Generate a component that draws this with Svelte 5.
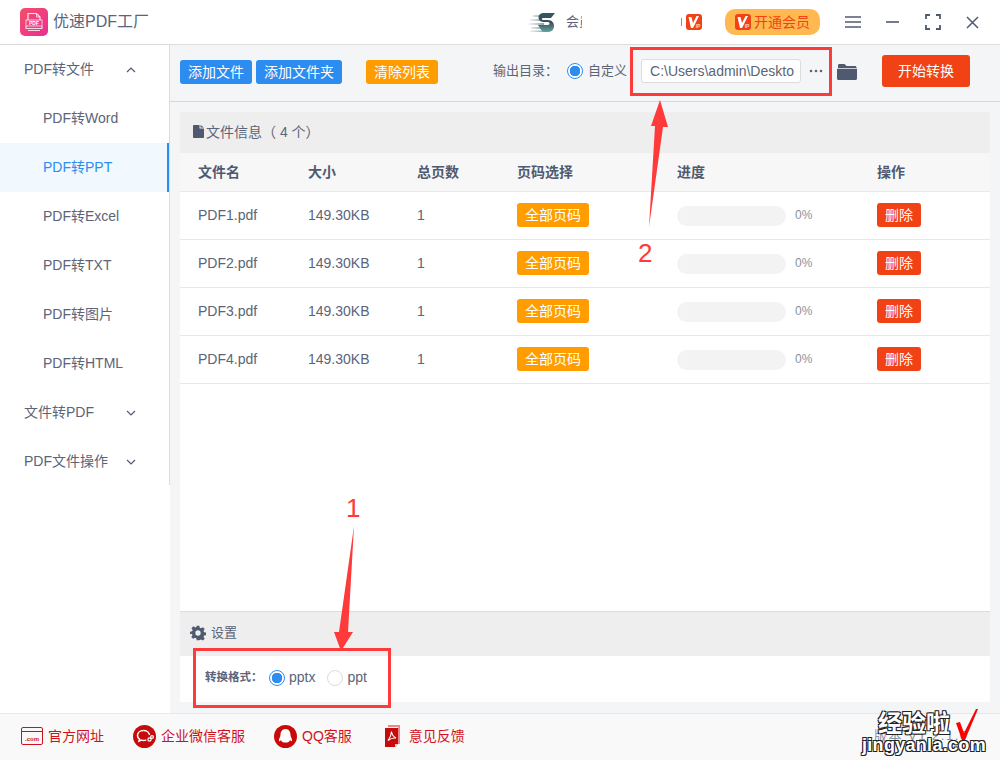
<script>
	const menu = ['PDF转Word', 'PDF转PPT', 'PDF转Excel', 'PDF转TXT', 'PDF转图片', 'PDF转HTML'];
	const files = ['PDF1.pdf', 'PDF2.pdf', 'PDF3.pdf', 'PDF4.pdf'];
</script>

{#snippet vipIcon()}
	<svg width="16" height="16" viewBox="0 0 16 16">
		<rect width="16" height="16" rx="3" fill="#f04215" />
		<path d="M2.500 3h3l1.500 6 3.500-7h2.500L7 14H5z" fill="#fff" />
		<text x="12" y="13.500" class="vip-ip">IP</text>
	</svg>
{/snippet}

<div class="app">
	<header class="titlebar">
		<div class="logo">
			<svg width="28" height="28" viewBox="0 0 28 28">
				<defs>
					<linearGradient id="lg" x1="0" y1="0" x2="1" y2="1">
						<stop offset="0" stop-color="#f0506a" />
						<stop offset="1" stop-color="#ec2f92" />
					</linearGradient>
				</defs>
				<rect width="28" height="28" rx="5" fill="url(#lg)" />
				<path d="M8 12V5.500h8.500l3.500 3.500v3" fill="none" stroke="#fff" stroke-width="1.200" opacity="0.85" />
				<path d="M16.500 5.500V9H20" fill="none" stroke="#fff" stroke-width="1" opacity="0.7" />
				<rect x="6" y="12" width="16" height="6" fill="none" stroke="#fff" stroke-width="1" opacity="0.7" />
				<text x="14" y="17" class="logo-text">PDF</text>
				<path d="M6 18v2.500h16V18M8 22.500h12" fill="none" stroke="#fff" stroke-width="1.100" opacity="0.8" />
			</svg>
			<span class="app-name">优速PDF工厂</span>
		</div>

		<div class="promo">
			<svg width="28" height="21" viewBox="0 0 28 21">
				<defs>
					<linearGradient id="sg" x1="0" y1="0" x2="0" y2="1">
						<stop offset="0" stop-color="#2f5963" />
						<stop offset="0.5" stop-color="#3e4f5c" />
						<stop offset="1" stop-color="#5fa5a0" />
					</linearGradient>
					<linearGradient id="fade" x1="0" y1="0" x2="1" y2="0">
						<stop offset="0" stop-color="#9fb8b8" stop-opacity="0.1" />
						<stop offset="1" stop-color="#7e9aa0" />
					</linearGradient>
				</defs>
				<path d="M5 3h10v2H5zM2 7h12v2H2zM0 11h16v2H0zM3 15h14v2H3zM2 18.500h14v1.500H2z" fill="url(#fade)" />
				<path d="M27 1H15C9 1 9 10 15 10h5c2 0 2 3 0 3-4 0-7 0-10 0 2 3 4 7 6 7h4c8 0 8-12 0-12h-5c-1.500 0-1.500-2 0-2h8z" fill="url(#sg)" />
			</svg>
			<span class="promo-text">会员</span>
		</div>

		<span class="vip-mini">
			<i class="sliver"></i>
			{@render vipIcon()}
		</span>
		<button class="vip-btn">
			{@render vipIcon()}
			开通会员
		</button>

		<div class="win-ctrls">
			<svg width="16" height="12" viewBox="0 0 16 12"><path d="M0 1h16M0 6h16M0 11h16" stroke="#4f5a70" stroke-width="1.600" /></svg>
			<svg width="14" height="12" viewBox="0 0 14 12"><path d="M0 6h13" stroke="#4f5a70" stroke-width="1.600" /></svg>
			<svg width="16" height="16" viewBox="0 0 16 16"><path d="M1 5V1h4M11 1h4v4M15 11v4h-4M5 15H1v-4" fill="none" stroke="#4f5a70" stroke-width="1.800" /></svg>
			<svg width="13" height="13" viewBox="0 0 13 13"><path d="M1 1l11 11M12 1L1 12" stroke="#4f5a70" stroke-width="1.500" /></svg>
		</div>
	</header>

	<div class="body">
		<aside class="sidebar">
			<div class="group">PDF转文件
				<svg class="chev" width="10" height="6" viewBox="0 0 10 6"><path d="M1 5l4-4 4 4" fill="none" stroke="#4f5a70" stroke-width="1.200" /></svg>
			</div>
			{#each menu as item, i}
				<div class="item" class:active={i === 1}>{item}</div>
			{/each}
			<div class="group">文件转PDF
				<svg class="chev" width="10" height="6" viewBox="0 0 10 6"><path d="M1 1l4 4 4-4" fill="none" stroke="#4f5a70" stroke-width="1.200" /></svg>
			</div>
			<div class="group">PDF文件操作
				<svg class="chev" width="10" height="6" viewBox="0 0 10 6"><path d="M1 1l4 4 4-4" fill="none" stroke="#4f5a70" stroke-width="1.200" /></svg>
			</div>
		</aside>

		<main class="main">
			<div class="toolbar">
				<button class="btn blue">添加文件</button>
				<button class="btn blue second">添加文件夹</button>
				<button class="btn orange clear">清除列表</button>
				<span class="out-label">输出目录：</span>
				<span class="radio on"></span>
				<span class="out-custom">自定义</span>
				<div class="path">C:\Users\admin\Deskto</div>
				<span class="dots">
					<svg width="14" height="4" viewBox="0 0 14 4"><circle cx="2" cy="2" r="1.300" /><circle cx="7" cy="2" r="1.300" /><circle cx="12" cy="2" r="1.300" /></svg>
				</span>
				<svg class="folder" width="20" height="17" viewBox="0 0 20 17">
					<path d="M1 2.500C1 1.500 1.600 1 2.500 1h5l2 2h8.500c.8 0 1.500.6 1.500 1.500V5H1z" fill="#4f5a70" />
					<path d="M0 5.800h20v9.700c0 .8-.7 1.500-1.500 1.500h-17C.7 17 0 16.300 0 15.500z" fill="#4f5a70" />
				</svg>
				<button class="start">开始转换</button>
			</div>

			<section class="panel">
				<div class="panel-title">
					<svg width="11" height="13" viewBox="0 0 11 13"><path d="M0 1c0-.6.4-1 1-1h5.500v3.500H11V12c0 .6-.4 1-1 1H1c-.6 0-1-.4-1-1zM7.500 0L11 2.500H7.500z" fill="#4f5a70" /></svg>
					<span>文件信息（ 4 个）</span>
				</div>
				<div class="row head">
					<span>文件名</span><span>大小</span><span>总页数</span><span>页码选择</span><span>进度</span><span>操作</span>
				</div>
				{#each files as f}
					<div class="row">
						<span>{f}</span>
						<span>149.30KB</span>
						<span>1</span>
						<span><button class="tag orange">全部页码</button></span>
						<span class="prog"><i class="track"></i><em>0%</em></span>
						<span><button class="tag red">删除</button></span>
					</div>
				{/each}
				<div class="spacer"></div>
				<div class="set-title">
					<svg width="16" height="16" viewBox="0 0 24 24"><path fill="#4f5a70" fill-rule="evenodd" d="M10 1h4l.6 3.200 2 .8L19.300 3.200l2.800 2.800-1.800 2.700.8 2 3.200.6v4l-3.200.6-.8 2 1.800 2.700-2.800 2.800-2.700-1.800-2 .8L14 23h-4l-.6-3.200-2-.8-2.700 1.800-2.800-2.800 1.800-2.700-.8-2L0 14v-4l3.200-.6.800-2L2.200 4.700 5 1.900l2.700 1.800 2-.8zM12 8a4 4 0 1 0 0 8 4 4 0 0 0 0-8z" /></svg>
					<span>设置</span>
				</div>
				<div class="set-body">
					<b>转换格式：</b>
					<span class="radio on"></span><span class="fmt">pptx</span>
					<span class="radio off"></span><span class="fmt">ppt</span>
				</div>
			</section>
		</main>
	</div>

	<footer class="footer">
		<span class="link first">
			<svg width="22" height="18" viewBox="0 0 22 18"><rect x=".5" y=".5" width="21" height="17" rx="1.500" fill="none" stroke="#d0111b" /><path d="M1 4.500h20" stroke="#d0111b" /><text x="11" y="14" class="com">.com</text></svg>
			官方网址
		</span>
		<span class="link wx">
			<svg width="23" height="23" viewBox="0 0 23 23">
				<circle cx="11.500" cy="11.500" r="11.500" fill="#c70a0a" />
				<path d="M10.500 5.500c-3.500 0-6 2.200-6 5 0 1.500.8 2.800 2 3.700l-.5 2 2.300-1.100c.7.200 1.400.3 2.200.3 1 0 2-.2 2.800-.6" fill="none" stroke="#fff" stroke-width="1.500" />
				<path d="M10.500 5.500c3.200 0 5.800 2 6 4.500" fill="none" stroke="#fff" stroke-width="1.500" />
				<circle cx="16.500" cy="14.500" r="1.600" fill="none" stroke="#fff" stroke-width="1.200" />
				<circle cx="19" cy="12" r="1.400" fill="none" stroke="#fff" stroke-width="1.200" />
			</svg>
			企业微信客服
		</span>
		<span class="link qq">
			<svg width="23" height="23" viewBox="0 0 23 23"><circle cx="11.500" cy="11.500" r="11.500" fill="#c70a0a" /><path d="M11.500 4c3.500 0 5 3 5 6 0 2 2 4 1.500 6-.5.500-1.500 0-2-1-.5 2-2 2.500-4.500 2.500S7.500 17 7 15c-.5 1-1.500 1.500-2 1-.5-2 1.500-4 1.500-6 0-3 1.500-6 5-6z" fill="#fff" /></svg>
			QQ客服
		</span>
		<span class="link fb">
			<svg width="17" height="23" viewBox="0 0 17 23">
				<path d="M4 0h12v19h-2V2H4z" fill="#e98a8a" />
				<path d="M1 3h13v16l-3 3H1z" fill="#c70a0a" />
				<path d="M11 22l3-3h-3z" fill="#f6c9c9" />
				<path d="M7.500 6.500c.4 3 1.500 5 4.500 6.500-3-.3-5.500.3-8 2.500 2-2.500 3.300-5.500 3.500-9z" fill="none" stroke="#fff" stroke-width="1.100" />
			</svg>
			意见反馈
		</span>
	</footer>

	<!-- annotations drawn over the screenshot -->
	<div class="mark box-path"></div>
	<div class="mark box-fmt"></div>
	<svg class="arrows" width="1000" height="760" viewBox="0 0 1000 760">
		<path d="M649 227L655 126 651 126 660 100 668 127 663 127z" fill="#ff3a3a" />
		<path d="M354 526L348 632 353 632 341 651 334 632 339 632z" fill="#ff3a3a" />
	</svg>
	<span class="num n1">1</span>
	<span class="num n2">2</span>

	<div class="wm">
		<span class="ver">版本 V1.2.1.0</span>
		<span class="wm-top">经验啦</span>
		<svg class="tick" width="24" height="32" viewBox="0 0 24 32"><path d="M1 14l4-1 4 11L21 0h2L10 31H7z" fill="#f00" /></svg>
		<span class="wm-bot">jingyanla.com</span>
	</div>
</div>

<style>
	:global(body) {
		margin: 0;
		background: #fff;
	}

	.app {
		position: relative;
		width: 1000px;
		height: 760px;
		overflow: hidden;
		display: flex;
		flex-direction: column;
		font-family: "Liberation Sans", "Noto Sans CJK SC", sans-serif;
		color: #5b6478;
		font-size: 14px;
		line-height: 20px;
	}

	button {
		border: 0;
		padding: 0;
		font-family: inherit;
		line-height: 20px;
	}

	.titlebar {
		height: 44px;
		flex: none;
		display: flex;
		align-items: center;
		border-bottom: 1px solid #dcdcdc;
		padding-left: 20px;
	}

	.logo {
		display: flex;
		align-items: center;
		gap: 5px;
		width: 508px;
	}

	.logo-text {
		font-size: 5px;
		font-weight: 700;
		fill: #fff;
		text-anchor: middle;
	}

	.app-name {
		font-size: 16px;
		color: #5b6478;
	}

	.promo {
		display: flex;
		align-items: center;
		gap: 10px;
		width: 153px;
		font-size: 13px;
	}

	.promo-text {
		width: 16px;
		overflow: hidden;
		white-space: nowrap;
	}

	.sliver {
		width: 1px;
		height: 8px;
		margin: 4px 4px 0 0;
		background: #8a92a0;
	}

	.vip-mini {
		display: flex;
		width: 44px;
	}

	.vip-ip {
		font-size: 5px;
		font-weight: 700;
		fill: #ffd2b8;
		text-anchor: middle;
	}

	.vip-btn {
		width: 95px;
		height: 26px;
		border-radius: 10px;
		background: #ffb950;
		color: #f04215;
		font-size: 14px;
		display: flex;
		align-items: center;
		justify-content: center;
		gap: 3px;
	}

	.win-ctrls {
		display: flex;
		align-items: center;
		margin-left: 25px;
		gap: 25px;
	}

	.body {
		flex: 1;
		display: flex;
		min-height: 0;
	}

	.sidebar {
		width: 169px;
		height: 440px;
		flex: none;
		border-right: 1px solid #dcdcdc;
		background: #fff;
	}

	.group {
		height: 47px;
		padding: 0 33px 2px 24px;
		display: flex;
		align-items: center;
		justify-content: space-between;
		font-size: 14px;
	}

	.chev {
		margin-top: 2px;
	}

	.item {
		height: 49px;
		line-height: 49px;
		padding-left: 43px;
		font-size: 14px;
	}

	.item.active {
		background: #f1f8fe;
		color: #2d8cf0;
		box-shadow: inset -2px 0 0 #2d8cf0;
	}

	.main {
		flex: 1;
		background: #f4f5f7;
		height: 668px;
		display: flex;
		flex-direction: column;
	}

	.toolbar {
		height: 52px;
		padding-bottom: 4px;
		flex: none;
		display: flex;
		align-items: center;
		border-bottom: 1px solid #d8d8d8;
		padding-left: 10px;
	}

	.btn {
		height: 24px;
		margin-top: 2px;
		border-radius: 3px;
		color: #fff;
		font-size: 14px;
		padding: 0 8px;
	}

	.blue {
		background: #2d8cf0;
	}

	.orange {
		background: #ff9c00;
	}

	.second {
		margin-left: 4px;
	}

	.clear {
		margin-left: 24px;
	}

	.out-label {
		margin-left: 55px;
		font-size: 13px;
	}

	.radio {
		width: 16px;
		height: 16px;
		box-sizing: border-box;
		border-radius: 50%;
		display: inline-block;
		flex: none;
		background: #fff;
		border: 1px solid #dcdcdc;
	}

	.radio.on {
		border-color: #2d8cf0;
		background: radial-gradient(circle, #2d8cf0 0 5px, #fff 5.500px);
	}

	.toolbar .radio {
		margin-left: 9px;
	}

	.out-custom {
		margin-left: 5px;
		font-size: 13px;
		width: 43px;
		flex: none;
	}

	.path {
		width: 160px;
		height: 24px;
		box-sizing: border-box;
		border: 1px solid #dcdcdc;
		border-radius: 3px;
		background: #fff;
		font-size: 14px;
		line-height: 22px;
		padding-left: 8px;
		white-space: nowrap;
		overflow: hidden;
		margin-left: 10px;
		flex: none;
	}

	.dots {
		margin-left: 8px;
		display: flex;
		fill: #5b6478;
	}

	.folder {
		margin-left: 14px;
	}

	.start {
		width: 88px;
		height: 32px;
		margin-left: 25px;
		border-radius: 3px;
		background: #f04215;
		color: #fff;
		font-size: 14px;
	}

	.panel {
		flex: 1;
		margin: 10px 10px 11px;
		background: #fff;
		display: flex;
		flex-direction: column;
	}

	.panel-title {
		height: 39px;
		padding: 0 0 2px 13px;
		flex: none;
		background: #eee;
		display: flex;
		align-items: center;
		gap: 2px;
		font-size: 14px;
	}

	.row {
		height: 45px;
		padding: 0 0 2px 18px;
		flex: none;
		display: grid;
		grid-template-columns: 110px 109px 100px 160px 200px 1fr;
		align-items: center;
		border-bottom: 1px solid #e8e8e8;
		font-size: 14px;
	}

	.row.head {
		height: 38px;
		padding-bottom: 0;
		background: #f7f7f7;
		font-weight: 700;
		font-size: 14px;
		color: #4f5a70;
	}

	.tag {
		display: block;
		height: 24px;
		border-radius: 3px;
		color: #fff;
		font-size: 14px;
	}

	.tag.orange {
		width: 72px;
	}

	.tag.red {
		width: 44px;
		background: #f04215;
	}

	.prog {
		display: flex;
		align-items: center;
		gap: 9px;
	}

	.track {
		width: 109px;
		height: 20px;
		margin-top: 2px;
		border-radius: 10px;
		background: #f3f3f3;
	}

	.prog em {
		font-style: normal;
		font-size: 12px;
		color: #8a92a0;
	}

	.spacer {
		flex: 1;
	}

	.set-title {
		height: 42px;
		padding: 0 0 2px 10px;
		flex: none;
		background: #eee;
		border-top: 1px solid #dcdcdc;
		display: flex;
		align-items: center;
		gap: 5px;
		font-size: 13px;
	}

	.set-body {
		height: 44px;
		padding: 0 0 2px 25px;
		flex: none;
		display: flex;
		align-items: center;
		font-size: 14px;
	}

	.set-body b {
		font-size: 11.500px;
		margin: 0 6px 2px 0;
		width: 58px;
		flex: none;
		white-space: nowrap;
	}

	.fmt {
		margin: 0 12px 2px 4px;
	}

	.footer {
		height: 44px;
		padding-bottom: 2px;
		flex: none;
		background: #f9f9fa;
		border-top: 1px solid #e8e8e8;
		display: flex;
		align-items: center;
		color: #d0111b;
		font-size: 14px;
	}

	.link {
		display: flex;
		align-items: center;
		gap: 5px;
	}

	.link.first {
		margin-left: 21px;
		gap: 6px;
	}

	.link.first svg {
		margin-right: -1px;
	}

	.link.wx {
		margin-left: 29px;
	}

	.link.qq {
		margin-left: 29px;
	}

	.link.fb {
		margin-left: 32px;
		gap: 8px;
	}

	.com {
		font-size: 6px;
		font-weight: 700;
		fill: #d0111b;
		text-anchor: middle;
	}

	.mark {
		position: absolute;
		box-sizing: border-box;
		border: 3px solid #ff3a3a;
	}

	.box-path {
		left: 630px;
		top: 47px;
		width: 202px;
		height: 49px;
	}

	.box-fmt {
		left: 193px;
		top: 648px;
		width: 198px;
		height: 60px;
	}

	.arrows {
		position: absolute;
		left: 0;
		top: 0;
		pointer-events: none;
	}

	.num {
		position: absolute;
		color: #ff3a3a;
		font-size: 26px;
		line-height: 30px;
	}

	.n1 {
		left: 346px;
		top: 493px;
	}

	.n2 {
		left: 638px;
		top: 238px;
	}

	.wm {
		position: absolute;
		left: 860px;
		top: 705px;
		width: 140px;
		height: 55px;
	}

	.ver {
		position: absolute;
		left: 14px;
		top: 21px;
		font-size: 13px;
		letter-spacing: 1.500px;
		color: #8a92a0;
		white-space: nowrap;
	}

	.wm-top,
	.wm-bot {
		position: absolute;
		color: #fff;
		font-weight: 700;
		white-space: nowrap;
		text-shadow: -1px -1px 0 #222, 1px -1px 0 #222, -1px 1px 0 #222, 1px 1px 0 #222;
	}

	.wm-top {
		left: 18px;
		top: 6px;
		font-size: 24px;
		line-height: 26px;
	}

	.wm-bot {
		left: 2px;
		top: 29px;
		font-size: 18px;
		line-height: 22px;
		letter-spacing: 0.300px;
	}

	.tick {
		position: absolute;
		left: 95px;
		top: 4px;
	}
</style>
